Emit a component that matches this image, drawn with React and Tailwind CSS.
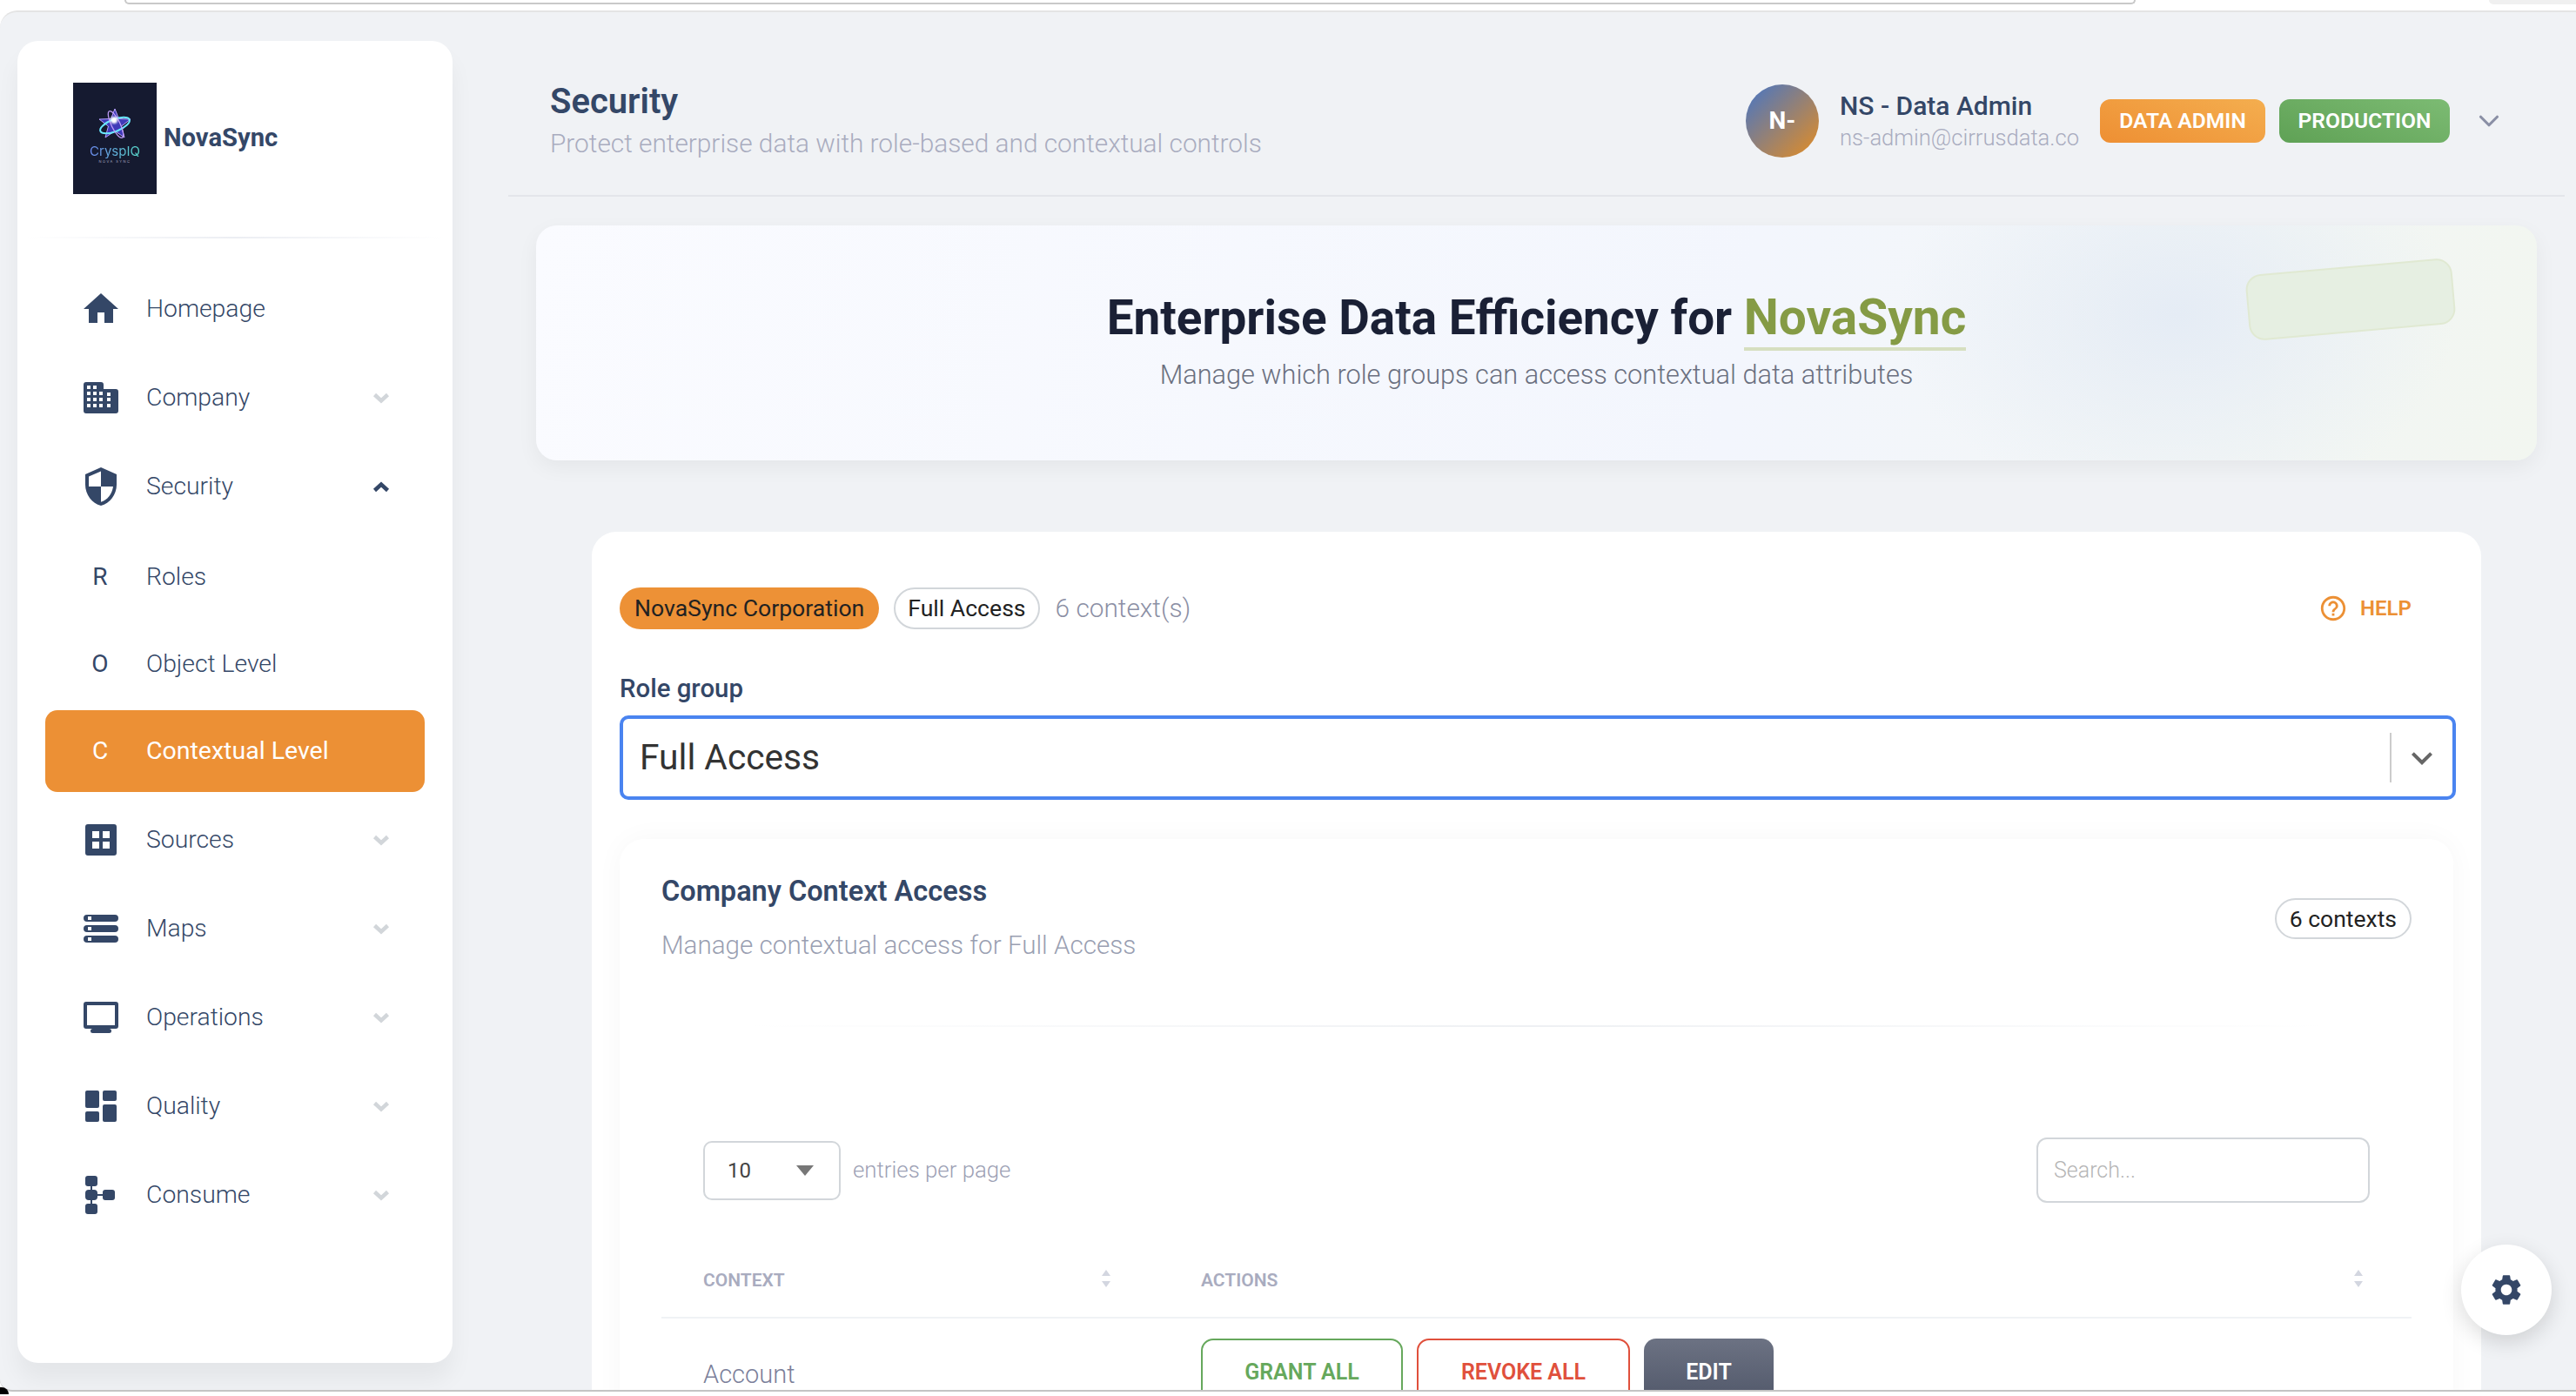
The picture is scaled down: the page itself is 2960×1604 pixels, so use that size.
import React from "react";
import { MdHome, MdSecurity, MdSettings, MdKeyboardArrowDown, MdOutlineHelpOutline } from "react-icons/md";
import { ChevronDown } from "lucide-react";

const CompanyIcon = () => (
  <svg viewBox="0 0 40 36" className="w-[40px] h-[36px]" fill="#344767">
    <path
      fillRule="evenodd"
      d="M3 0h17a3 3 0 0 1 3 3v5h14a3 3 0 0 1 3 3v22a3 3 0 0 1-3 3H3a3 3 0 0 1-3-3V3a3 3 0 0 1 3-3zM4 4v4h4V4zm7 0v4h4V4zM4 11v4h4v-4zm7 0v4h4v-4zm7 0v4h4v-4zm9 1v4h4v-4zM4 18v4h4v-4zm7 0v4h4v-4zm7 0v4h4v-4zm9 0v4h4v-4zM4 25v4h4v-4zm7 0v4h4v-4zm7 0v4h4v-4zm9 0v4h4v-4z"
    />
  </svg>
);

const SourcesIcon = () => (
  <svg viewBox="0 0 36 36" className="w-[36px] h-[36px]" fill="#344767">
    <path
      fillRule="evenodd"
      d="M3 0h30a3 3 0 0 1 3 3v30a3 3 0 0 1-3 3H3a3 3 0 0 1-3-3V3a3 3 0 0 1 3-3zm5 8v8h8V8zm12 0v8h8V8zM8 20v8h8v-8zm12 0v8h8v-8z"
    />
  </svg>
);

const MapsIcon = () => (
  <svg viewBox="0 0 40 32" className="w-[40px] h-[32px]" fill="#344767">
    <path
      fillRule="evenodd"
      d="M4 0h32a4 4 0 0 1 0 8H4a4 4 0 0 1 0-8zm1 2v4h4V2zM4 12h32a4 4 0 0 1 0 8H4a4 4 0 0 1 0-8zm1 2v4h4v-4zM4 24h32a4 4 0 0 1 0 8H4a4 4 0 0 1 0-8zm1 2v4h4v-4z"
    />
  </svg>
);

const OperationsIcon = () => (
  <svg viewBox="0 0 40 36" className="w-[40px] h-[36px]" fill="#344767">
    <path
      fillRule="evenodd"
      d="M3 0h34a3 3 0 0 1 3 3v25a3 3 0 0 1-3 3H3a3 3 0 0 1-3-3V3a3 3 0 0 1 3-3zm1 4v23h32V4z"
    />
    <rect x="8" y="31" width="24" height="5" rx="2.500" />
  </svg>
);

const QualityIcon = () => (
  <svg viewBox="0 0 36 36" className="w-[36px] h-[36px]" fill="#344767">
    <rect x="0" y="0" width="16" height="20" rx="2" />
    <rect x="20" y="0" width="16" height="12" rx="2" />
    <rect x="0" y="24" width="16" height="12" rx="2" />
    <rect x="20" y="16" width="16" height="20" rx="2" />
  </svg>
);

const ConsumeIcon = () => (
  <svg viewBox="0 0 36 44" className="w-[36px] h-[44px]" fill="#344767">
    <rect x="0" y="0" width="14" height="12" rx="3" />
    <rect x="0" y="16" width="14" height="12" rx="4" />
    <rect x="0" y="32" width="14" height="12" rx="3" />
    <rect x="20" y="16" width="14" height="12" rx="3" />
    <rect x="6" y="10" width="2" height="24" />
    <rect x="12" y="21" width="10" height="2" />
  </svg>
);

const Chevron = ({ up }) => (
  <svg viewBox="0 0 20 13" className="w-[20px] h-[13px]" fill="none">
    <polyline
      points={up ? "2.500,10.500 10,3.500 17.500,10.500" : "2.500,2.500 10,9.500 17.500,2.500"}
      stroke={up ? "#344767" : "#d2d6da"}
      strokeWidth="4.500"
    />
  </svg>
);

const nav = [
  { label: "Homepage", icon: <MdHome className="w-[48px] h-[48px] shrink-0" /> },
  { label: "Company", icon: <CompanyIcon />, arrow: "down" },
  { label: "Security", icon: <MdSecurity className="w-[48px] h-[48px] shrink-0" />, arrow: "up" },
];

const nav2 = [
  { label: "Sources", icon: <SourcesIcon /> },
  { label: "Maps", icon: <MapsIcon /> },
  { label: "Operations", icon: <OperationsIcon /> },
  { label: "Quality", icon: <QualityIcon /> },
  { label: "Consume", icon: <ConsumeIcon /> },
];

const NavRow = ({ item }) => (
  <div className="h-[102px] mx-[32px] pl-[44px] pr-[40px] flex items-center text-[#344767]">
    <div className="w-[40px] flex justify-center">{item.icon}</div>
    <span className="ml-[32px] flex-1 text-[28.3px] font-light">{item.label}</span>
    {item.arrow && <Chevron up={item.arrow === "up"} />}
  </div>
);

const SubRow = ({ letter, label, active }) => (
  <div className="h-[100px] flex items-center">
    <div
      className={`w-full mx-[32px] h-[94px] pl-[44px] rounded-[14px] flex items-center ${
        active ? "bg-[#ec9035] text-white" : "text-[#344767]"
      }`}
    >
      <span className="w-[40px] text-center text-[28px] -ml-[1px]">{letter}</span>
      <span className={`ml-[33px] ${active ? "text-[28.5px] font-normal" : "text-[28.3px] font-light"}`}>{label}</span>
    </div>
  </div>
);

const Logo = () => (
  <div className="w-[96px] h-[128px] bg-[#151a30] flex flex-col items-center pt-[28px] shrink-0">
    <svg viewBox="0 0 40 38" className="w-[40px] h-[38px]" fill="none">
      <path
        d="M20 2l4.500 11.500L38 14l-10.500 8 3.500 13-11-7.500L9 35l3.500-13L2 14l13.500-.5z"
        fill="#3f3ab8"
        stroke="#b9a2fc"
        strokeWidth="1"
      />
      <ellipse cx="20" cy="21" rx="18" ry="7" transform="rotate(-22 20 21)" stroke="#6ae8ff" strokeWidth="2" />
      <ellipse cx="21" cy="20" rx="17" ry="5" transform="rotate(64 21 20)" stroke="#c09cf8" strokeWidth="1.300" />
      <circle cx="19" cy="15" r="4" fill="#ffffff" className="blur-[1px]" />
    </svg>
    <span className="mt-[5px] text-[15px] leading-[16px] font-['Inter',sans-serif] bg-[linear-gradient(90deg,#6d8cf0,#56d6c8)] bg-clip-text text-transparent">
      CryspIQ
    </span>
    <span className="mt-[1px] text-[4px] leading-[6px] tracking-[1.5px] text-[#a8acc0] font-['Inter',sans-serif]">NOVA SYNC</span>
  </div>
);

const SortIcon = () => (
  <svg viewBox="0 0 12 20" className="w-[12px] h-[20px]" fill="#d3d6e0">
    <path d="M6 0l5 7H1zM1 13h10l-5 7z" />
  </svg>
);

const Sidebar = () => (
  <aside className="w-[500px] h-[1519px] ml-[20px] mt-[33px] shrink-0 bg-white rounded-[24px] shadow-[0_20px_27px_rgba(0,0,0,0.05)]">
    <div className="h-[225px] pl-[64px] pt-[48px] flex items-start">
      <Logo />
      <span className="ml-[8px] mt-[46px] text-[29.2px] leading-[34px] font-bold text-[#344767]">NovaSync</span>
    </div>
    <div className="h-[2px] mx-[10px] bg-[linear-gradient(90deg,transparent,#eceef3,transparent)]" />
    <nav className="mt-[30px]">
      {nav.map((item) => (
        <NavRow key={item.label} item={item} />
      ))}
      <div className="mt-[3px]">
        <SubRow letter="R" label="Roles" />
        <SubRow letter="O" label="Object Level" />
        <SubRow letter="C" label="Contextual Level" active />
      </div>
      <div className="mt-[1px]">
        {nav2.map((item) => (
          <NavRow key={item.label} item={{ ...item, arrow: "down" }} />
        ))}
      </div>
    </nav>
  </aside>
);

const Header = () => (
  <header className="h-[212px] border-b-2 border-[#e3e5ea] pl-[48px] pr-[68px] pt-[40px] flex items-center justify-between">
    <div>
      <h1 className="text-[40px] leading-[48px] font-semibold text-[#344767]">Security</h1>
      <p className="mt-[4px] text-[29.8px] leading-[40px] font-light text-[#a9acbf]">
        Protect enterprise data with role-based and contextual controls
      </p>
    </div>
    <div className="flex items-center">
      <div className="w-[84px] h-[84px] rounded-full bg-[linear-gradient(135deg,#4475c8,#e58d22)] flex items-center justify-center text-white text-[28px] font-bold">
        N-
      </div>
      <div className="ml-[24px] w-[299px]">
        <div className="text-[30px] leading-[36px] font-medium text-[#344767]">NS - Data Admin</div>
        <div className="mt-[2px] text-[25.6px] leading-[32px] font-light text-[#a9acbf]">ns-admin@cirrusdata.co</div>
      </div>
      <div className="w-[190px] h-[50px] rounded-[12px] bg-[linear-gradient(20deg,#ee8f33,#f4ae4f)] flex items-center justify-center text-white text-[24.6px] font-semibold">
        DATA ADMIN
      </div>
      <div className="ml-[16px] w-[196px] h-[50px] rounded-[12px] bg-[linear-gradient(20deg,#5fa155,#7cbb73)] flex items-center justify-center text-white text-[24.6px] font-semibold">
        PRODUCTION
      </div>
      <ChevronDown className="ml-[26px] w-[38px] h-[38px] text-[#8a8fa5]" strokeWidth={2} />
    </div>
  </header>
);

const Hero = () => (
  <section className="relative h-[270px] mt-[33px] ml-[32px] mr-[32px] rounded-[24px] bg-[radial-gradient(320px_230px_at_82%_38%,#e5ecf5,transparent),linear-gradient(100deg,#fafbff,#f3f6fd_60%,#f2f6f0)] shadow-[0_8px_24px_rgba(0,0,0,0.05)] flex flex-col items-center pt-[72px]">
    <h2 className="text-[54.8px] leading-[68px] font-bold text-[#1a2035]">
      Enterprise Data Efficiency for{" "}
      <span className="text-[56.8px] text-[#859b45] border-b-4 border-[#d6dfc0] inline-block leading-[68px]">NovaSync</span>
    </h2>
    <p className="mt-[6px] text-[30.7px] leading-[44px] font-light text-[#6b7080]">
      Manage which role groups can access contextual data attributes
    </p>
    <div className="absolute left-[1966px] top-[47px] w-[238px] h-[76px] rounded-[18px] bg-[#e6efe2] border-2 border-[#e0e9d2] -rotate-[5deg]" />
  </section>
);

const ContentCard = () => (
  <section className="mt-[82px] ml-[96px] mr-[96px] rounded-t-[28px] bg-white px-[32px] pt-[64px] h-[1100px]">
    <div className="flex items-center">
      <span className="h-[48px] px-[17px] rounded-full bg-[#ed9136] flex items-center text-[26.6px] text-[#222222]">
        NovaSync Corporation
      </span>
      <span className="ml-[17px] h-[48px] px-[14px] rounded-full border-2 border-[#d2d6da] flex items-center text-[26.6px] text-[#222222]">
        Full Access
      </span>
      <span className="ml-[18px] text-[29.8px] font-light text-[#8c90a5]">6 context(s)</span>
      <div className="ml-auto mr-[48px] flex items-center text-[#ec9035]">
        <MdOutlineHelpOutline className="w-[34px] h-[34px]" />
        <span className="ml-[14px] text-[24px] font-semibold">HELP</span>
      </div>
    </div>

    <div className="mt-[50px] text-[29.4px] leading-[36px] font-medium text-[#344767]">Role group</div>
    <div className="mt-[13px] -mr-[3px] h-[97px] border-4 border-[#4a84f0] rounded-[10px] flex items-center pl-[19px]">
      <span className="flex-1 text-[40.7px] text-[#333333]">Full Access</span>
      <div className="w-[2px] h-[57px] bg-[#cccccc]" />
      <MdKeyboardArrowDown className="mx-[11px] w-[48px] h-[48px] text-[#666666]" />
    </div>

    <div className="mt-[45px] h-[700px] rounded-[28px] bg-white shadow-[0_0_32px_rgba(0,0,0,0.035)] px-[48px] pt-[40px]">
      <div className="flex justify-between">
        <div>
          <h3 className="text-[32.5px] leading-[40px] font-semibold text-[#344767]">Company Context Access</h3>
          <p className="mt-[22px] text-[29.6px] leading-[40px] font-light text-[#9a9fb2]">
            Manage contextual access for Full Access
          </p>
        </div>
        <span className="mt-[28px] h-[47px] px-[15px] rounded-full border-2 border-[#d2d6da] flex items-center text-[26.5px] text-[#222222]">
          6 contexts
        </span>
      </div>
      <div className="mt-[72px] h-[2px] bg-[linear-gradient(90deg,transparent_5%,#eef0f3_50%,transparent_95%)]" />

      <div className="mt-[127px] pl-[48px] pr-[48px] flex items-center justify-between">
        <div className="flex items-center">
          <div className="w-[158px] h-[68px] border-2 border-[#d2d6da] rounded-[10px] flex items-center justify-between pl-[26px] pr-[29px] text-[24px] text-[#444444]">
            10
            <svg viewBox="0 0 20 12" className="w-[20px] h-[12px]" fill="#777777">
              <path d="M0 0h20L10 12z" />
            </svg>
          </div>
          <span className="ml-[14px] text-[25.8px] font-light text-[#9da1b5]">entries per page</span>
        </div>
        <div className="w-[383px] h-[75px] border-2 border-[#d2d6da] rounded-[12px] flex items-center pl-[18px] text-[25px] font-light text-[#b5b5b5]">
          Search...
        </div>
      </div>

      <div className="mt-[62px] h-[71px] border-b-2 border-[#f0f2f5] flex items-start pt-[15px] pl-[48px] pr-[55px] text-[21px] font-semibold text-[#a9acbf]">
        <span className="w-[457px] leading-[24px]">CONTEXT</span>
        <SortIcon />
        <span className="ml-[103px] leading-[24px] flex-1">ACTIONS</span>
        <SortIcon />
      </div>

      <div className="flex pl-[48px] pt-[23px]">
        <span className="w-[572px] pt-[20px] text-[29px] font-light text-[#7b809a]">Account</span>
        <div className="flex gap-[16px] text-[25px] font-semibold">
          <div className="w-[232px] h-[78px] rounded-[14px] border-2 border-[#66a85c] text-[#66a85c] flex items-center justify-center">GRANT ALL</div>
          <div className="w-[245px] h-[78px] rounded-[14px] border-2 border-[#e0503c] text-[#e0503c] flex items-center justify-center">REVOKE ALL</div>
          <div className="w-[149px] h-[78px] rounded-[14px] bg-[linear-gradient(180deg,#6c7283,#4f5668)] text-white flex items-center justify-center">EDIT</div>
        </div>
      </div>
    </div>
  </section>
);

export default function App() {
  return (
    <div className="relative w-[2960px] h-[1604px] overflow-hidden bg-white font-['Roboto',sans-serif]">
      {/* browser chrome left over at the top of the capture */}
      <div className="h-[12px] relative">
        <div className="ml-[143px] w-[2311px] h-[5px] border-b-2 border-x-2 border-[#c9c9c9] rounded-b-[16px]" />
        <div className="absolute right-0 top-0 w-[100px] h-[5px] bg-[#f0f0f0] rounded-bl-[10px]" />
      </div>
      <div className="h-[1587px] flex overflow-hidden bg-[#f0f2f5] border-t-2 border-b-2 border-t-[#e4e4e4] border-b-[#c4c4c4] rounded-tl-[20px] rounded-bl-[14px]">
        <Sidebar />
        <main className="flex-1 ml-[64px] mr-[13px]">
          <Header />
          <Hero />
          <ContentCard />
        </main>
      </div>
      <div className="absolute left-0 bottom-[2px] w-[10px] h-[8px] bg-black rounded-tr-[10px]" />

      <button className="absolute left-[2828px] top-[1430px] w-[104px] h-[104px] rounded-full bg-white shadow-[0_8px_24px_rgba(0,0,0,0.14)] flex items-center justify-center">
        <MdSettings className="w-[42px] h-[42px] text-[#344767]" />
      </button>
    </div>
  );
}
